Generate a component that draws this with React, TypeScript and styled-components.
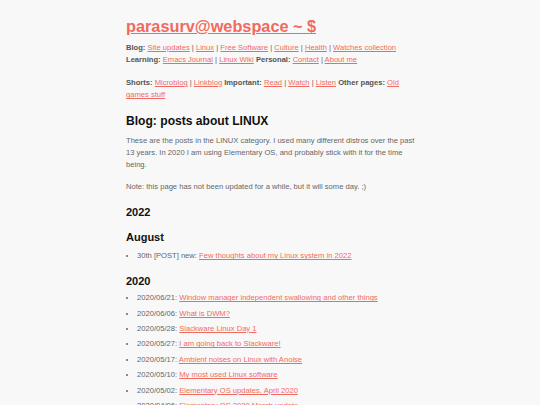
import styled, { createGlobalStyle } from "styled-components";

const GlobalStyle = createGlobalStyle`
  html, body {
    margin: 0;
    padding: 0;
    background: #f8f8f8;
  }
  body {
    font-family: "Liberation Sans", Arial, sans-serif;
    color: #666;
  }
`;

const linux2020 = [
  { date: "2020/06/21", title: "Window manager independent swallowing and other things" },
  { date: "2020/06/06", title: "What is DWM?" },
  { date: "2020/05/28", title: "Slackware Linux Day 1" },
  { date: "2020/05/27", title: "I am going back to Slackware!" },
  { date: "2020/05/17", title: "Ambient noises on Linux with Anoise" },
  { date: "2020/05/10", title: "My most used Linux software" },
  { date: "2020/05/02", title: "Elementary OS updates, April 2020" },
  { date: "2020/04/06", title: "Elementary OS 2020 March update" },
];

const Sep = () => <> | </>;

const App: React.FC = () => {
  return (
    <>
      <GlobalStyle />
      <Page>
        <Title>
          <a href="#">parasurv@webspace ~ $</a>
        </Title>

        <Nav>
          <Label>Blog:</Label> <Link href="#">Site updates</Link>
          <Sep />
          <Link href="#">Linux</Link>
          <Sep />
          <Link href="#">Free Software</Link>
          <Sep />
          <Link href="#">Culture</Link>
          <Sep />
          <Link href="#">Health</Link>
          <Sep />
          <Link href="#">Watches collection</Link>
          <br />
          <Label>Learning:</Label> <Link href="#">Emacs Journal</Link>
          <Sep />
          <Link href="#">Linux Wiki</Link> <Label>Personal:</Label>{" "}
          <Link href="#">Contact</Link>
          <Sep />
          <Link href="#">About me</Link>
        </Nav>

        <Nav $gap={10.6}>
          <Label>Shorts:</Label> <Link href="#">Microblog</Link>
          <Sep />
          <Link href="#">Linkblog</Link> <Label>Important:</Label>{" "}
          <Link href="#">Read</Link>
          <Sep />
          <Link href="#">Watch</Link>
          <Sep />
          <Link href="#">Listen</Link> <Label>Other pages:</Label>{" "}
          <Link href="#">Old games stuff</Link>
        </Nav>

        <PageHeading>Blog: posts about LINUX</PageHeading>

        <Text>
          These are the posts in the LINUX category. I used many different
          distros over the past 13 years. In 2020 I am using Elementary OS, and
          probably stick with it for the time being.
        </Text>
        <Text $gap={9.4}>
          Note: this page has not been updated for a while, but it will some
          day. ;)
        </Text>

        <Section>2022</Section>
        <Section $gap={12}>August</Section>
        <PostList $gap={6.4}>
          <Post>
            30th [POST] new:{" "}
            <Link href="#">Few thoughts about my Linux system in 2022</Link>
          </Post>
        </PostList>

        <Section>2020</Section>
        <PostList $gap={4.4}>
          {linux2020.map((post) => (
            <Post key={post.date + post.title}>
              {post.date}: <Link href="#">{post.title}</Link>
            </Post>
          ))}
        </PostList>
      </Page>
    </>
  );
};

export default App;

const Page = styled.main`
  width: 290px;
  margin: 0 auto;
  padding: 16px 0 0 2px;
  font-size: 7.6px;
  line-height: 12.2px;
`;

const Title = styled.h1`
  margin: 0;
  font-size: 16.3px;
  line-height: 20px;
  font-weight: bold;

  > a {
    color: #f06a5f;
    text-decoration: underline;
  }
`;

const Nav = styled.p<{ $gap?: number }>`
  margin: ${({ $gap }) => $gap ?? 6}px 0 0;
  color: #666;
`;

const Label = styled.b`
  color: #555;
`;

const Link = styled.a`
  color: #f06a5f;
  text-decoration: underline;
`;

const PageHeading = styled.h2`
  margin: 13px 0 0;
  font-size: 12.1px;
  line-height: 15px;
  color: #111;
`;

const Text = styled.p<{ $gap?: number }>`
  margin: ${({ $gap }) => $gap ?? 5.6}px 0 0;
  color: #666;
`;

const Section = styled.h3<{ $gap?: number }>`
  margin: ${({ $gap }) => $gap ?? 12.5}px 0 0;
  font-size: 11px;
  line-height: 13px;
  color: #111;
`;

const PostList = styled.ul<{ $gap?: number }>`
  margin: ${({ $gap }) => $gap ?? 6}px 0 0;
  padding: 0 0 0 11px;
  list-style: disc;
`;

const Post = styled.li`
  margin-bottom: 3.2px;
  color: #666;
`;
